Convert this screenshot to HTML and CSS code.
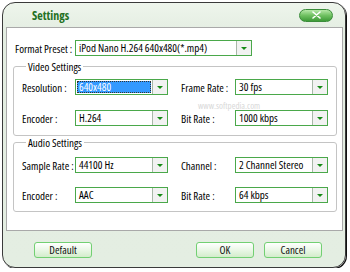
FILE: index.html
```html
<!DOCTYPE html>
<html lang="en">
<head>
    <meta charset="UTF-8">
    <title>Settings</title>
    <link rel="stylesheet" href="styles.css">
</head>
<body>
    <div class="dialog">
        <div class="titlebar">
            <span class="title">Settings</span>
            <button class="close-btn">
                <svg width="9" height="8" viewBox="0 0 9 8"><path d="M1 1 L8 7 M8 1 L1 7" stroke="#fff" stroke-width="1.6" stroke-linecap="round"/></svg>
            </button>
        </div>

        <div class="panel">
            <div class="preset-row">
                <span class="preset-label">Format Preset :</span>
                <div class="select wide"><span class="value">iPod Nano H.264 640x480(*.mp4)</span><span class="arrow"></span></div>
            </div>

            <fieldset class="group">
                <legend>Video Settings</legend>
                <div class="grid">
                    <span class="label">Resolution :</span>
                    <div class="select"><span class="value selected">640x480</span><span class="arrow"></span></div>
                    <span class="label right">Frame Rate :</span>
                    <div class="select"><span class="value">30 fps</span><span class="arrow"></span></div>

                    <span class="label">Encoder :</span>
                    <div class="select"><span class="value">H.264</span><span class="arrow"></span></div>
                    <span class="label right">Bit Rate :</span>
                    <div class="select"><span class="value">1000 kbps</span><span class="arrow"></span></div>
                </div>
                <span class="watermark">www.softpedia.com</span>
            </fieldset>

            <fieldset class="group audio">
                <legend>Audio Settings</legend>
                <div class="grid">
                    <span class="label">Sample Rate :</span>
                    <div class="select"><span class="value">44100 Hz</span><span class="arrow"></span></div>
                    <span class="label right">Channel :</span>
                    <div class="select"><span class="value">2 Channel Stereo</span><span class="arrow"></span></div>

                    <span class="label">Encoder :</span>
                    <div class="select"><span class="value">AAC</span><span class="arrow"></span></div>
                    <span class="label right">Bit Rate :</span>
                    <div class="select"><span class="value">64 kbps</span><span class="arrow"></span></div>
                </div>
            </fieldset>
        </div>

        <div class="footer">
            <button class="btn">Default</button>
            <button class="btn ok">OK</button>
            <button class="btn">Cancel</button>
        </div>
    </div>
</body>
</html>
```
FILE: styles.css
```css
body {
    margin: 0;
    background: #fff;
    font-family: "Open Sans", "DejaVu Sans", sans-serif;
    font-stretch: condensed;
    font-size: 11px;
    color: #000;
}
.dialog {
    margin: 2px 0 0 2px;
    width: 342px;
    height: 264px;
    border: 1px solid #3a3a3a;
    border-radius: 13px;
    background: linear-gradient(#eef5ec, #e3ede1 30px, #e4eee2);
    box-shadow: 1px 1px 0 #111;
    display: flex;
    flex-direction: column;
}
.titlebar {
    height: 24px;
    display: flex;
    align-items: center;
    justify-content: space-between;
    padding: 0 12px 0 29px;
}
.title {
    font-size: 12px;
    font-weight: bold;
    color: #237023;
    line-height: 14px;
    padding-top: 1px;
}
.close-btn {
    width: 34px;
    height: 13px;
    padding: 0;
    border: 1px solid #3a8c3a;
    border-radius: 7px;
    background: linear-gradient(#b6e8a8, #6fc061 50%, #3e9b38);
    display: flex;
    align-items: center;
    justify-content: center;
}
.panel {
    height: 190px;
    margin: 0 2px 0 3px;
    border: 1px solid #a9a9a9;
    background: #fff;
    padding: 12px 5px 0 6px;
}
.preset-row {
    display: flex;
    align-items: center;
    padding-left: 2px;
}
.preset-label {
    width: 60px;
}
.select {
    display: flex;
    height: 14px;
    border: 1px solid #4aa84a;
    background: #fff;
}
.select.wide {
    width: 175px;
}
.value {
    flex: 1;
    padding-left: 3px;
    line-height: 14px;
    white-space: nowrap;
}
.value.selected {
    margin: 1px;
    padding-left: 2px;
    line-height: 12px;
    background: #3399ff;
    color: #fff;
    outline: 1px dotted #333;
    outline-offset: -1px;
}
.arrow {
    width: 14px;
    border-left: 1px solid #a8b8a8;
    background: #f2f2f2;
    display: flex;
    align-items: center;
    justify-content: center;
}
.arrow::after {
    content: "";
    border-left: 3px solid transparent;
    border-right: 3px solid transparent;
    border-top: 3px solid #168a16;
}
.group {
    position: relative;
    margin: 4px 0 0;
    padding: 6px 8px 9px;
    border: 1px solid #c4c4c4;
    border-radius: 3px;
    min-width: 0;
}
.group.audio {
    margin-top: 0;
    padding-top: 8px;
    padding-bottom: 8px;
}
.group legend {
    padding: 0 2px;
    margin-left: 4px;
    line-height: 13px;
}
.audio .grid {
    row-gap: 14px;
}
.grid {
    display: grid;
    grid-template-columns: 53px 93px 67px 93px;
    row-gap: 15px;
    align-items: center;
}
.label.right {
    padding-left: 13px;
}
.watermark {
    position: absolute;
    left: 184px;
    top: 28px;
    font-size: 9px;
    line-height: 9px;
    color: #d8d8d8;
}
.footer {
    display: flex;
    padding: 11px 23px 0 31px;
}
.btn {
    width: 58px;
    height: 16px;
    padding: 0;
    border: 1px solid #72d072;
    border-radius: 3px;
    background: linear-gradient(#ffffff, #eaf7e6 50%, #d3edcb);
    font-family: inherit;
    font-stretch: condensed;
    font-size: 11px;
    line-height: 14px;
    color: #111;
}
.btn.ok {
    margin-left: auto;
    margin-right: 10px;
}
```
